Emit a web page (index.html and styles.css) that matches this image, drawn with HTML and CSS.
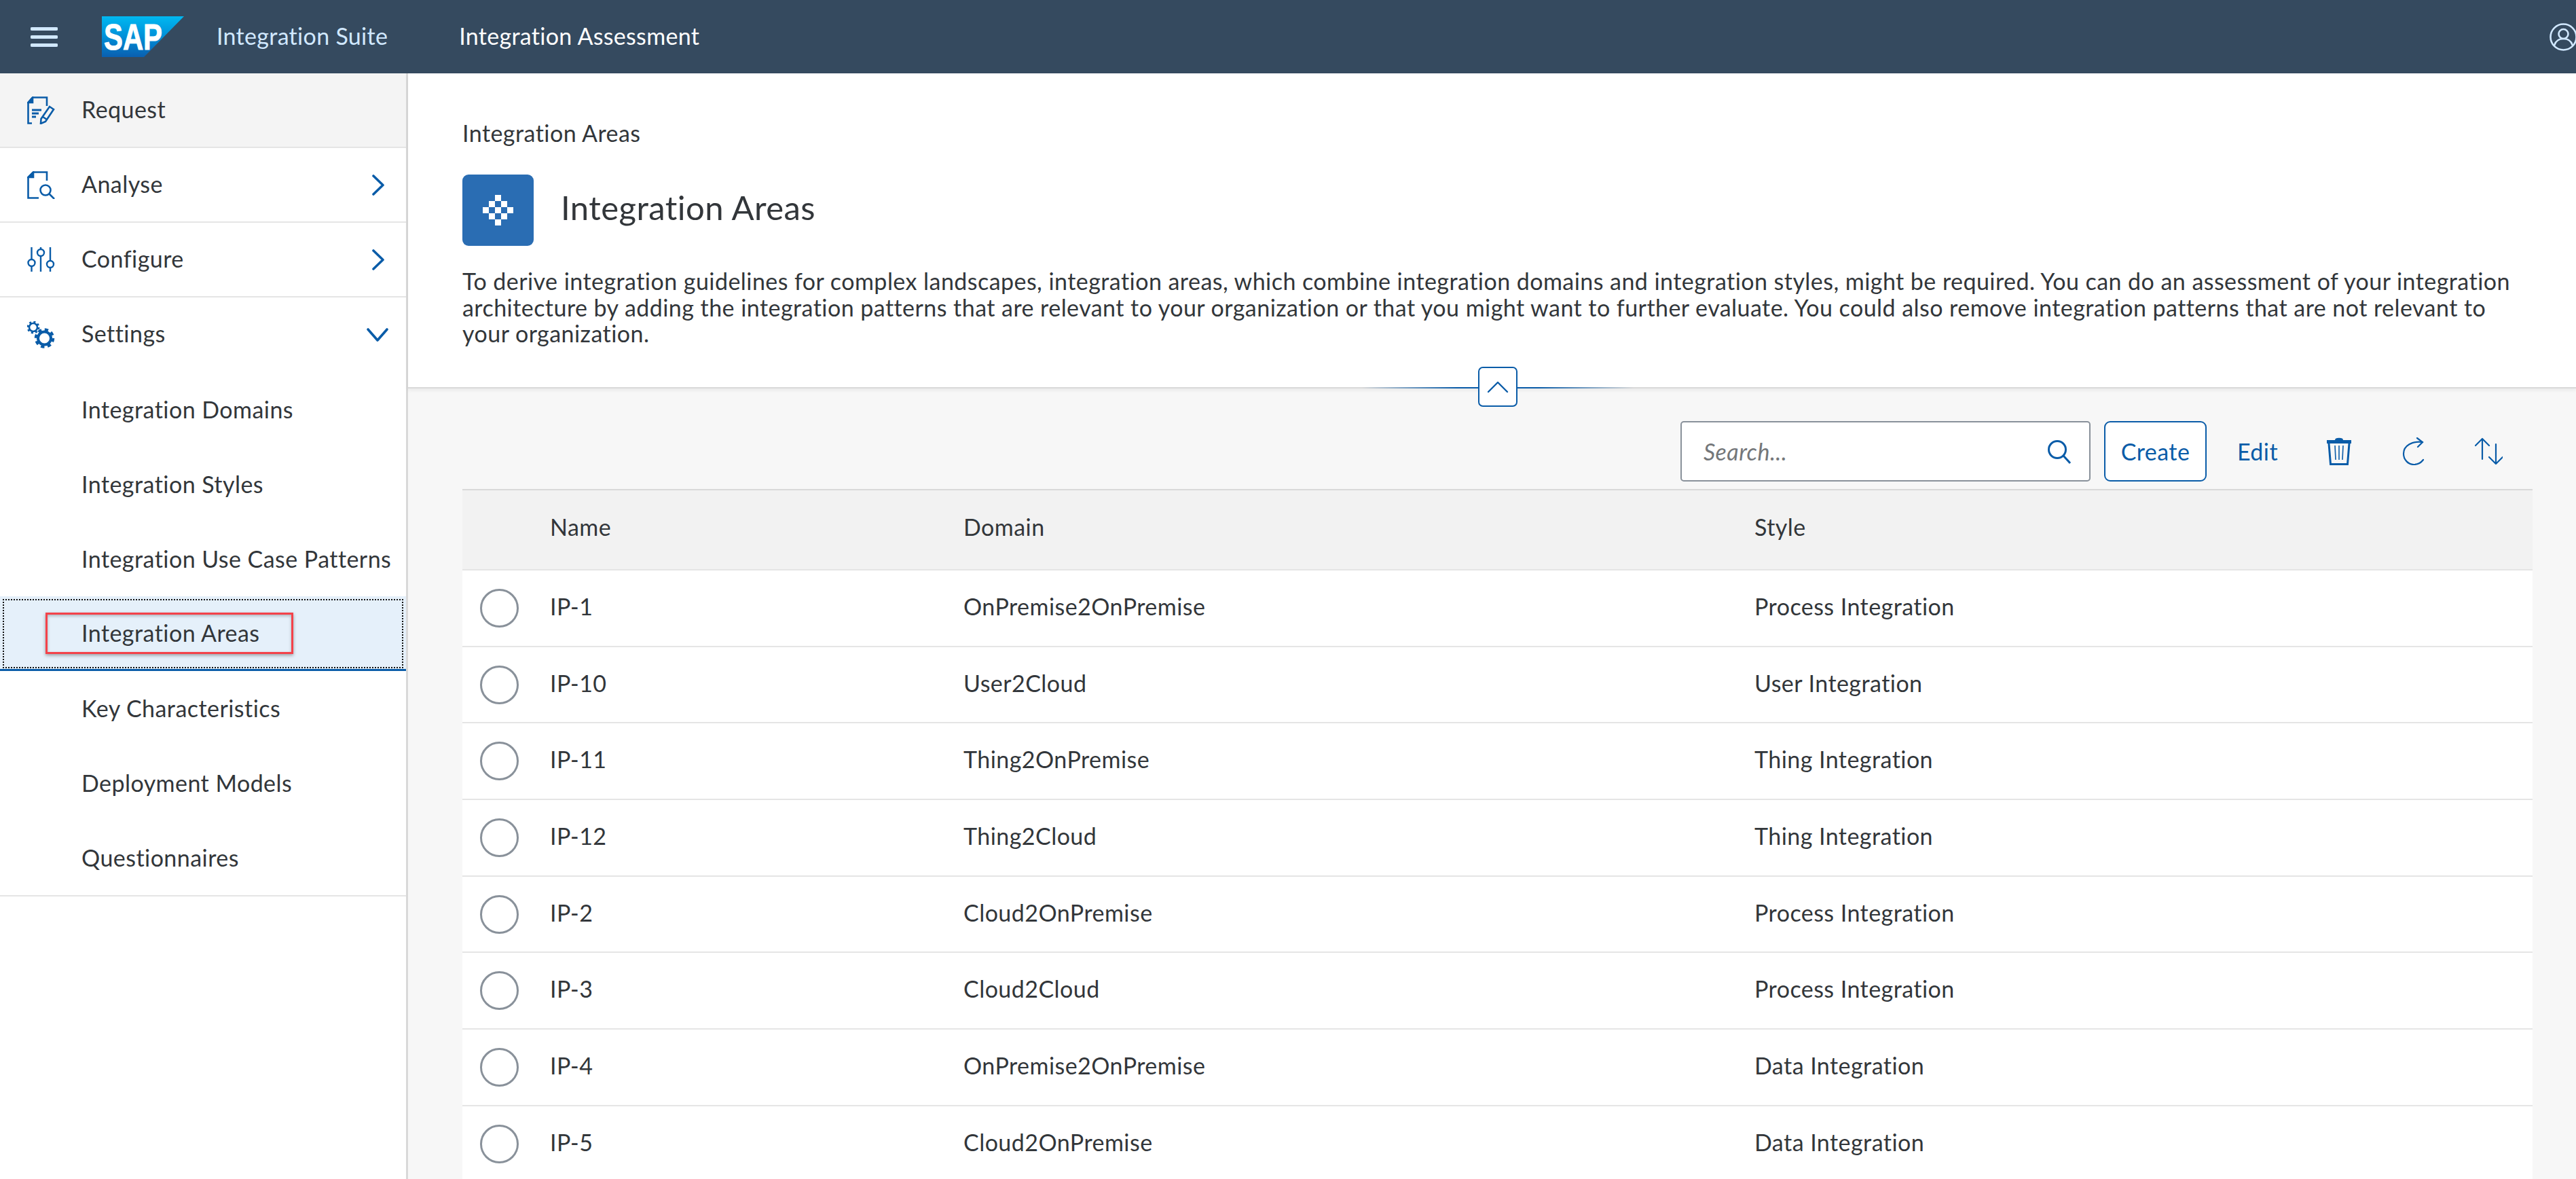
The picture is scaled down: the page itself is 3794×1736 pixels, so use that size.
FILE: index.html
```html
<!DOCTYPE html>
<html lang="en">
  <head>
    <meta charset="UTF-8" />
    <title>Integration Assessment</title>
    <link rel="stylesheet" href="styles.css">
  </head>
  <body>
    <header class="shell">
      <svg class="burger" width="40" height="29" viewBox="0 0 40 29"><path d="M2 2.500H38M2 14.500H38M2 26.500H38" stroke="#d1e8ff" stroke-width="5" stroke-linecap="round"/></svg>
      <svg class="logo" width="121" height="60" viewBox="0 0 121 60">
        <defs><linearGradient id="sapfill" x1="0" y1="0" x2="0" y2="1"><stop offset="0" stop-color="#00b8f1"/><stop offset="0.5" stop-color="#0090d8"/><stop offset="1" stop-color="#0a5fb0"/></linearGradient></defs>
        <polygon points="0,0 121,0 62,60 0,60" fill="url(#sapfill)"/>
        <text x="3" y="49" class="logo-text" textLength="86" lengthAdjust="spacingAndGlyphs">SAP</text>
      </svg>
      <span class="suite">Integration Suite</span>
      <span class="app-title">Integration Assessment</span>
      <svg class="avatar" width="41" height="41" viewBox="0 0 41 41" fill="none" stroke="#d1e8ff" stroke-width="2.600"><circle cx="20.500" cy="20.500" r="19"/><circle cx="20.500" cy="16" r="7"/><path d="M7 33c2-7 7-10 13.500-10S32 26 34 33"/></svg>
    </header>

    <div class="layout">
      <nav class="sidebar">
        <a class="nav-item active">
          <svg class="nav-icon" width="41" height="41" viewBox="0 0 41 41" fill="none" stroke="#0a5ca8" stroke-width="2.600"><path d="M8 1.500H29V14M8 1.500L1.500 9V39.500H7"/><path d="M8 1.500V9H1.500L8 1.500Z" fill="#0a5ca8"/><path d="M7 20H21M7 25H17M7 30H13" stroke-width="3"/><path d="M33 15L39 19L27 37L20 40L20.500 33L33 15ZM23 30L29 34"/></svg>
          <span>Request</span>
        </a>
        <a class="nav-item">
          <svg class="nav-icon" width="41" height="41" viewBox="0 0 41 41" fill="none" stroke="#0a5ca8" stroke-width="2.600"><path d="M9 1.500H29V14M9 1.500L1.500 9V39.500H17"/><path d="M9 1.500V9H1.500L9 1.500Z" fill="#0a5ca8"/><circle cx="27" cy="28" r="7.500"/><path d="M32.500 33.500L40 41"/></svg>
          <span>Analyse</span>
          <svg class="chev" width="18" height="31" viewBox="0 0 18 31" fill="none" stroke="#0a5ca8" stroke-width="3.600" stroke-linecap="round" stroke-linejoin="round"><path d="M2 2L16 15.500L2 29"/></svg>
        </a>
        <a class="nav-item">
          <svg class="nav-icon" width="41" height="36" viewBox="0 0 41 36" fill="none" stroke="#0a5ca8" stroke-width="2.400"><path d="M6.500 0V18M6.500 28V36M20 0V3M20 13V36M34 0V20M34 30V36"/><circle cx="6.500" cy="23" r="5"/><circle cx="20" cy="8" r="5"/><circle cx="34" cy="25" r="5"/></svg>
          <span>Configure</span>
          <svg class="chev" width="18" height="31" viewBox="0 0 18 31" fill="none" stroke="#0a5ca8" stroke-width="3.600" stroke-linecap="round" stroke-linejoin="round"><path d="M2 2L16 15.500L2 29"/></svg>
        </a>
        <a class="nav-item">
          <svg class="nav-icon" width="41" height="40" viewBox="0 0 41 40" fill="none" stroke="#0a5ca8"><circle cx="9" cy="9" r="6" stroke-width="2.600"/><circle cx="9" cy="9" r="8" stroke-width="3" stroke-dasharray="3 3.300"/><circle cx="25.500" cy="25" r="9.500" stroke-width="4"/><circle cx="25.500" cy="25" r="12.500" stroke-width="4.500" stroke-dasharray="5.200 4.600"/></svg>
          <span>Settings</span>
          <svg class="chev-down" width="32" height="20" viewBox="0 0 32 20" fill="none" stroke="#0a5ca8" stroke-width="3.600" stroke-linecap="round" stroke-linejoin="round"><path d="M2 2L16 18L30 2"/></svg>
        </a>
        <div class="subnav">
          <a class="sub-item">Integration Domains</a>
          <a class="sub-item">Integration Styles</a>
          <a class="sub-item">Integration Use Case Patterns</a>
          <a class="sub-item selected">Integration Areas<i class="callout"></i></a>
          <a class="sub-item">Key Characteristics</a>
          <a class="sub-item">Deployment Models</a>
          <a class="sub-item">Questionnaires</a>
        </div>
      </nav>

      <main class="content">
        <section class="page-head">
          <div class="crumb">Integration Areas</div>
          <div class="title-row">
            <svg class="title-icon" width="105" height="105" viewBox="0 0 105 105">
              <rect width="105" height="105" rx="9" fill="#2a6db3"/>
              <path fill="#fff" d="M48 30h9v9h-9zM39 39h9v9h-9zM57 39h9v9h-9zM48 48h9v9h-9zM30 48h9v9h-9zM66 48h9v9h-9zM39 57h9v9h-9zM57 57h9v9h-9zM48 66h9v9h-9z"/>
            </svg>
            <h1>Integration Areas</h1>
          </div>
          <p class="intro">To derive integration guidelines for complex landscapes, integration areas, which combine integration domains and integration styles, might be required. You can do an assessment of your integration architecture by adding the integration patterns that are relevant to your organization or that you might want to further evaluate. You could also remove integration patterns that are not relevant to your organization.</p>
          <div class="collapse-bar">
            <button class="collapse-btn">
              <svg width="32" height="18" viewBox="0 0 32 18" fill="none" stroke="#0a5ca8" stroke-width="2.400" stroke-linecap="round" stroke-linejoin="round"><path d="M2 16L16 2L30 16"/></svg>
            </button>
          </div>
        </section>

        <section class="list-area">
          <div class="toolbar">
            <div class="search">
              <span>Search...</span>
              <svg width="36" height="36" viewBox="0 0 36 36" fill="none" stroke="#0a5ca8" stroke-width="3"><circle cx="15" cy="15" r="12.500"/><path d="M24 24L34 35"/></svg>
            </div>
            <button class="btn btn-create">Create</button>
            <button class="btn btn-edit">Edit</button>
            <button class="btn btn-icon">
              <svg width="36" height="41" viewBox="0 0 36 41" fill="none" stroke="#0a5ca8" stroke-width="2"><path d="M0 6.500H36" stroke-width="5"/><path d="M13 4C13 1 23 1 23 4" fill="#0a5ca8"/><path d="M3 9L5.500 39.500H30.500L33 9" stroke-width="3"/><path d="M12 12L13 33M18 12V33M24 12L23 33" stroke-width="1.600"/></svg>
            </button>
            <button class="btn btn-icon">
              <svg width="34" height="41" viewBox="0 0 34 41" fill="none" stroke="#0a5ca8" stroke-width="2.200" stroke-linecap="round"><path d="M30 7C15 5 2 12 2 24C2 33 9 40 17 40C23 40 28 37 31 33"/><path d="M22 1L30 7L23 14"/></svg>
            </button>
            <button class="btn btn-icon">
              <svg width="41" height="41" viewBox="0 0 41 41" fill="none" stroke="#0a5ca8" stroke-width="2.200" stroke-linecap="round" stroke-linejoin="round"><path d="M11 2V32M1 12L11 2L21 12"/><path d="M31 10V39M21 29L31 39L41 29"/></svg>
            </button>
          </div>

          <div class="table">
            <div class="row head">
              <div></div><div>Name</div><div>Domain</div><div>Style</div>
            </div>
            <div class="row"><div><span class="radio"></span></div><div>IP-1</div><div>OnPremise2OnPremise</div><div>Process Integration</div></div>
            <div class="row"><div><span class="radio"></span></div><div>IP-10</div><div>User2Cloud</div><div>User Integration</div></div>
            <div class="row"><div><span class="radio"></span></div><div>IP-11</div><div>Thing2OnPremise</div><div>Thing Integration</div></div>
            <div class="row"><div><span class="radio"></span></div><div>IP-12</div><div>Thing2Cloud</div><div>Thing Integration</div></div>
            <div class="row"><div><span class="radio"></span></div><div>IP-2</div><div>Cloud2OnPremise</div><div>Process Integration</div></div>
            <div class="row"><div><span class="radio"></span></div><div>IP-3</div><div>Cloud2Cloud</div><div>Process Integration</div></div>
            <div class="row"><div><span class="radio"></span></div><div>IP-4</div><div>OnPremise2OnPremise</div><div>Data Integration</div></div>
            <div class="row"><div><span class="radio"></span></div><div>IP-5</div><div>Cloud2OnPremise</div><div>Data Integration</div></div>
          </div>
        </section>
      </main>
    </div>
  </body>
</html>
```

FILE: styles.css
```css
html,
body {
  margin: 0;
  height: 100%;
  overflow: hidden;
}
body {
  font-family: Lato, "Noto Sans", sans-serif;
  font-size: 34px;
  font-variant-ligatures: none;
  letter-spacing: 0.45px;
  color: #32363a;
  background-color: #f7f7f7;
}
.shell {
  display: flex;
  align-items: center;
  height: 108px;
  letter-spacing: 0.3px;
  background-color: #354a5f;
}
.burger {
  margin-left: 45px;
}
.logo {
  margin-left: 65px;
}
.logo-text {
  font-family: "Liberation Sans", sans-serif;
  font-weight: bold;
  font-size: 53px;
  letter-spacing: 0;
  fill: #fff;
  stroke: #fff;
  stroke-width: 1px;
}
.suite {
  margin-left: 48px;
  padding-bottom: 4px;
  color: #d1e8ff;
}
.app-title {
  margin-left: 105px;
  padding-bottom: 4px;
  color: #fff;
}
.avatar {
  margin-left: auto;
  margin-right: -2px;
}
.layout {
  display: flex;
  height: 1628px;
}
.sidebar {
  flex: none;
  box-sizing: border-box;
  width: 601px;
  background-color: #fff;
  border-right: 3px solid #d9d9d9;
}
.nav-item {
  display: flex;
  align-items: center;
  box-sizing: border-box;
  height: 110px;
  padding-left: 40px;
  border-bottom: 2px solid #e5e5e5;
  position: relative;
}
.nav-item:nth-child(4) {
  border-bottom: none;
}
.nav-item.active {
  background-color: #f4f4f4;
}
.nav-icon {
  flex: none;
}
.nav-item span {
  position: absolute;
  left: 120px;
  top: 32px;
}
.chev {
  margin-left: auto;
  margin-right: 32px;
}
.chev-down {
  margin-left: auto;
  margin-right: 26px;
}
.subnav {
  border-bottom: 2px solid #e5e5e5;
}
.sub-item {
  display: flex;
  align-items: center;
  box-sizing: border-box;
  height: 110px;
  padding: 0 0 1px 120px;
  position: relative;
}
.sub-item.selected {
  background-color: #e5f0fa;
  border-bottom: 3px solid #0a5ca8;
  outline: 2px dotted #111;
  outline-offset: -6px;
}
.callout {
  position: absolute;
  left: 67px;
  top: 24px;
  width: 365px;
  height: 61px;
  box-sizing: border-box;
  border: 3px solid #f4424a;
  box-shadow: 0 2px 5px rgba(0, 0, 0, 0.35), inset 0 2px 4px rgba(0, 0, 0, 0.25);
}
.content {
  flex: 1;
  min-width: 0;
}
.page-head {
  position: relative;
  box-sizing: border-box;
  height: 464px;
  padding: 68px 64px 0 80px;
  background-color: #fff;
  border-bottom: 2px solid #d9d9d9;
  box-shadow: 0 3px 5px rgba(0, 0, 0, 0.06);
}
.crumb {
  line-height: 40px;
}
.title-row {
  display: flex;
  align-items: center;
  gap: 40px;
  margin-top: 41px;
}
h1 {
  margin: 0;
  padding-bottom: 10px;
  font-size: 49px;
  font-weight: normal;
}
.intro {
  margin: 33px 0 0;
  line-height: 38.5px;
}
.collapse-bar {
  position: absolute;
  left: 1405px;
  bottom: -2px;
  display: flex;
  justify-content: center;
  width: 400px;
  height: 2px;
  background: linear-gradient(to right, transparent, #0a5ca8 35%, #0a5ca8 65%, transparent);
}
.collapse-btn {
  display: flex;
  align-items: center;
  justify-content: center;
  flex: none;
  box-sizing: border-box;
  width: 58px;
  height: 59px;
  margin-top: -30px;
  padding: 0;
  background-color: #fff;
  border: 2px solid #0a5ca8;
  border-radius: 7px;
}
.list-area {
  padding: 48px 64px 0 80px;
}
.toolbar {
  display: flex;
  justify-content: flex-end;
  align-items: center;
  gap: 20px;
  height: 89px;
  margin-bottom: 11px;
  padding-right: 20px;
}
.search {
  display: flex;
  align-items: center;
  justify-content: space-between;
  box-sizing: border-box;
  width: 604px;
  height: 89px;
  padding: 0 26px 0 32px;
  background-color: #fff;
  border: 2px solid #89919a;
  border-radius: 5px;
  color: #74777a;
  font-style: italic;
}
.btn {
  height: 89px;
  padding: 0;
  font: inherit;
  letter-spacing: inherit;
  color: #0a5ca8;
  background: none;
  border: none;
}
.btn-create {
  width: 151px;
  background-color: #fff;
  border: 2px solid #0a5ca8;
  border-radius: 9px;
}
.btn-edit {
  width: 110px;
}
.btn-icon {
  width: 90px;
  display: flex;
  align-items: center;
  justify-content: center;
}
.table {
  background-color: #fff;
  border-top: 2px solid #d9d9d9;
}
.row {
  display: grid;
  grid-template-columns: 129px 609px 1165px 1fr;
  align-items: center;
  box-sizing: border-box;
  height: 112.7px;
  border-bottom: 2px solid #e5e5e5;
}
.row > div + div {
  padding-bottom: 6px;
}
.row.head {
  height: 118px;
  background-color: #f2f2f2;
}
.row.head > div + div {
  padding-bottom: 10px;
}
.radio {
  display: block;
  box-sizing: border-box;
  width: 57px;
  height: 57px;
  margin-left: 26px;
  border: 3px solid #89919a;
  border-radius: 50%;
}
```
